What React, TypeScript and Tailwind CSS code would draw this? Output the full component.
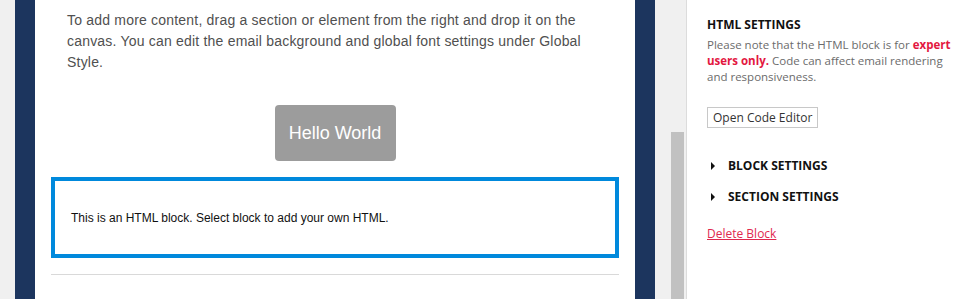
import React from "react";

const navy = "bg-[#1c355e]";

const Caret = () => (
  <svg width="6" height="8" viewBox="0 0 6 8" className="shrink-0">
    <path d="M1 0 L5 4 L1 8 Z" fill="#111" />
  </svg>
);

const App: React.FC = () => {
  return (
    <div className="flex h-[299px] w-[976px] overflow-hidden bg-white">
      {/* left page gutter */}
      <div className="w-[15px] bg-[#f0f0f0]" />
      <div className={`w-[20px] ${navy}`} />

      {/* email canvas */}
      <div className="flex w-[600px] flex-col bg-white font-['Liberation_Sans',Arial,sans-serif]">
        <p className="px-[32px] pt-[10px] text-[14px] leading-[21px] tracking-[0.2px] text-[#505050]">
          To add more content, drag a section or element from the right and drop it on the
          canvas. You can edit the email background and global font settings under Global
          Style.
        </p>

        <div className="mt-[32px] flex justify-center">
          <button className="flex h-[56px] w-[121px] items-center justify-center rounded-[4px] bg-[#9c9c9c] text-[18px] text-white">
            Hello World
          </button>
        </div>

        <div className="mx-[16px] mt-[16px] flex h-[81px] items-center border-4 border-[#0089dc] pl-[16px]">
          <span className="text-[12px] text-[#111]">
            This is an HTML block. Select block to add your own HTML.
          </span>
        </div>

        <div className="mx-[16px] mt-[16px] h-px bg-[#d9d9d9]" />
      </div>

      <div className={`w-[20px] ${navy}`} />

      {/* scroll track */}
      <div className="flex w-[31px] flex-col items-end bg-[#f0f0f0] pr-[2px] pt-[132px]">
        <div className="w-[13px] flex-1 bg-[#c1c1c1]" />
      </div>

      {/* settings panel */}
      <div className="flex flex-1 flex-col border-l border-[#dcdcdc] pl-[20px] pr-[12px] font-['Open_Sans','Noto_Sans',sans-serif]">
        <h2 className="mt-[16px] text-[12px] font-bold leading-[18px] text-[#111]">
          HTML SETTINGS
        </h2>
        <p className="mt-[3px] text-[11.5px] leading-[16px] text-[#6b6b6b]">
          Please note that the HTML block is for{" "}
          <span className="font-bold text-[#e3173f]">expert</span>{" "}
          <span className="font-bold text-[#e3173f]">users only.</span> Code can affect email
          rendering and responsiveness.
        </p>

        <div className="mt-[19px]">
          <button className="h-[21px] border border-[#c8c8c8] px-[5px] text-[12px] leading-[19px] text-[#333]">
            Open Code Editor
          </button>
        </div>

        <div className="mt-[29px] flex items-center gap-[12px] pl-[3px]">
          <Caret />
          <span className="text-[12px] font-bold leading-[18px] text-[#111]">BLOCK SETTINGS</span>
        </div>
        <div className="mt-[13px] flex items-center gap-[12px] pl-[3px]">
          <Caret />
          <span className="text-[12px] font-bold leading-[18px] text-[#111]">SECTION SETTINGS</span>
        </div>

        <a href="#" className="mt-[19px] self-start text-[12px] leading-[18px] text-[#e0284f] underline">
          Delete Block
        </a>
      </div>
    </div>
  );
};

export default App;
